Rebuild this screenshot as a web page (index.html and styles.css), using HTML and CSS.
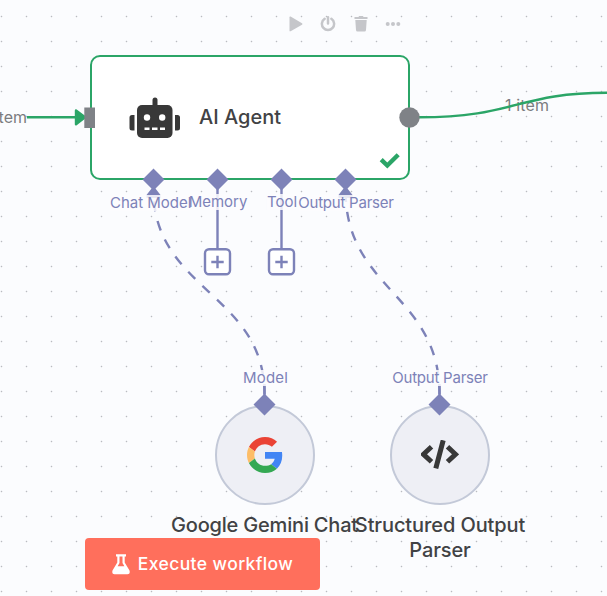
FILE: index.html
```html
<!DOCTYPE html>
<html lang="en">
<head>
<meta charset="utf-8">
<title>Workflow</title>
<link rel="stylesheet" href="styles.css">
</head>
<body>
<main class="canvas">
  <div class="toolbar">
    <svg width="16" height="16" viewBox="0 0 16 16"><path d="M1.500 1.200Q1.500 0 2.600.6L14 7.200Q15 8 14 8.700L2.600 15.200Q1.500 15.700 1.500 14.500Z"/></svg>
    <svg width="16" height="16" viewBox="0 0 16 16"><path class="power" d="M4.600 2.800A6.100 6.100 0 1 0 11.400 2.800M8 1.200V7.500"/></svg>
    <svg width="16" height="16" viewBox="0 0 16 16"><path d="M1.500 1H5.500L6 0H10L10.500 1H14.500V3H1.500ZM2.300 4H13.700L13 14Q12.900 15.500 11.500 15.500H4.500Q3.100 15.500 3 14Z"/></svg>
    <svg width="16" height="16" viewBox="0 0 16 16"><circle cx="2.700" cy="8" r="2"/><circle cx="8" cy="8" r="2"/><circle cx="13.300" cy="8" r="2"/></svg>
  </div>

  <section class="node agent">
    <svg class="robot" width="52" height="42" viewBox="0 -0.500 52 42">
      <rect x="23.500" y="0" width="5" height="12" rx="2.500"/>
      <rect x="8" y="7.500" width="35.500" height="33" rx="5"/>
      <path d="M5.500 17.500V33H3Q.5 33 .5 30.500V20Q.5 17.500 3 17.500ZM46 17.500V33H48.500Q51 33 51 30.500V20Q51 17.500 48.500 17.500Z"/>
      <g class="face"><circle cx="18" cy="20" r="3.200"/><circle cx="33.200" cy="20" r="3.200"/><path d="M15.500 30H20.500V32.500H15.500ZM23 30H28.500V32.500H23ZM31 30H36V32.500H31Z"/></g>
    </svg>
    <h1>AI Agent</h1>
    <svg class="check" width="22" height="18" viewBox="0 0 22 18"><path d="M2.200 7.700L8.300 13.500L19.200 2.700"/></svg>
  </section>

  <section class="node sub gemini">
    <svg width="36" height="36" viewBox="0 0 48 48">
      <path fill="#ea4335" d="M24 9.500c3.540 0 6.710 1.220 9.210 3.600l6.850-6.850C35.900 2.380 30.470 0 24 0 14.620 0 6.510 5.380 2.560 13.220l7.980 6.190C12.430 13.720 17.740 9.500 24 9.500z"/>
      <path fill="#4285f4" d="M46.980 24.550c0-1.570-.15-3.090-.38-4.550H24v9.020h12.940c-.58 2.960-2.260 5.480-4.780 7.180l7.730 6c4.510-4.180 7.090-10.360 7.090-17.650z"/>
      <path fill="#fdbd67" d="M10.530 28.590c-.48-1.450-.76-2.990-.76-4.590s.27-3.140.76-4.590l-7.980-6.190C.92 16.460 0 20.120 0 24c0 3.880.92 7.540 2.560 10.780l7.970-6.190z"/>
      <path fill="#34a853" d="M24 48c6.480 0 11.930-2.130 15.890-5.810l-7.730-6c-2.150 1.450-4.920 2.300-8.160 2.300-6.260 0-11.570-4.220-13.470-9.910l-7.980 6.190C6.510 42.620 14.620 48 24 48z"/>
    </svg>
  </section>
  <section class="node sub parser">
    <svg width="38" height="30" viewBox="0.500 0.500 38 30"><path class="code" d="M11 7.300L3 14.800L11 22.300M27 7.300L35 14.800L27 22.300M22.700 .8L15.300 28.800"/></svg>
  </section>

  <h2 class="name gemini-name">Google Gemini Chat</h2>
  <h2 class="name parser-name">Structured Output Parser</h2>
  <span class="items items-out">1 item</span>

  <svg class="wires" width="607" height="596" viewBox="0 0 607 596">
    <g class="main-wire">
      <path d="M27 117.300H78M419 117.300C515 117.300 518 92.800 607 92.800"/>
      <path class="arrow" d="M76 110.500L85 117.300L76 124.200Z"/>
    </g>
    <g class="ai-wire">
      <path class="dash dash-model" d="M153.500 190C153.500 290 264.500 294 264.500 394"/>
      <path class="dash dash-parser" d="M345.500 190C345.500 290 439.500 294 439.500 394"/>
      <path d="M217.500 185V249M281.500 185V249M264.500 384V400M439.500 384V400"/>
    </g>
    <path class="violet" d="M153.500 186L160.500 195V198H146.500V195ZM345.500 186L352.500 195V198H338.500V195Z"/>
  </svg>

  <span class="items items-in">1 item</span>
  <span class="label memory">Memory</span>
  <span class="label chat">Chat Model</span>
  <span class="label tool">Tool</span>
  <span class="label output">Output Parser</span>
  <span class="label model">Model</span>
  <span class="label output-sub">Output Parser</span>

  <svg class="wires" width="607" height="596" viewBox="0 0 607 596">
    <path class="port" d="M84.300 107.500H95V128H84.300Z"/>
    <circle class="port" cx="409.500" cy="117.500" r="10.200"/>
    <path class="violet" d="M153.500 168.500l11 11-11 11-11-11zM217.500 168.500l11 11-11 11-11-11zM281.500 168.500l11 11-11 11-11-11zM345.500 168.500l11 11-11 11-11-11zM264.500 393.500l11 11-11 11-11-11zM439.500 393.500l11 11-11 11-11-11z"/>
    <g class="plus">
      <rect x="205" y="249.300" width="25" height="25" rx="4"/><path d="M217.500 255.800V268.200M211.300 262H223.700"/>
      <rect x="269" y="249.300" width="25" height="25" rx="4"/><path d="M281.500 255.800V268.200M275.300 262H287.700"/>
    </g>
  </svg>

  <button class="execute">
    <svg width="18" height="21" viewBox="0 0 18 21"><path fill-rule="evenodd" d="M4 .3H14V2.500H12.700V8.500L17.500 16.500Q18.500 20.300 15.500 20.300H2.500Q-.5 20.300 .5 16.500L5.300 8.500V2.500H4ZM7.500 2.500V9L5.600 12.300H12.400L10.500 9V2.500Z"/></svg>
    <span>Execute workflow</span>
  </button>
</main>
</body>
</html>
```

FILE: styles.css
```css
body {
  margin: 0;
  overflow: hidden;
  font-family: Inter, "Liberation Sans", sans-serif;
}

.canvas {
  position: relative;
  width: 607px;
  height: 596px;
  overflow: hidden;
  background: radial-gradient(circle at 1.5px 16.5px, #b9bbc1 0, #b9bbc1 .6px, transparent 1.1px) 0 0 / 25px 25px #fbfcfe;
}

.toolbar {
  position: absolute;
  left: 288px;
  top: 15.500px;
  display: flex;
  gap: 16.300px;
  fill: #c5c6ca;
}

.toolbar .power {
  fill: none;
  stroke: #c5c6ca;
  stroke-width: 2.500;
  stroke-linecap: round;
}

.node {
  position: absolute;
  box-sizing: border-box;
  display: flex;
  align-items: center;
}

.agent {
  left: 90px;
  top: 55px;
  width: 320px;
  height: 125px;
  padding-left: 37px;
  background: #fff;
  border: 2px solid #2ba567;
  border-radius: 10px;
}

.robot {
  fill: #383838;
}

.robot .face {
  fill: #fff;
}

h1,
h2 {
  margin: 0;
  color: #414244;
  font-size: 20px;
  font-weight: 500;
  line-height: 25px;
}

h1 {
  margin-left: 18px;
}

.check {
  position: absolute;
  right: 7px;
  bottom: 8px;
  fill: none;
  stroke: #2ba567;
  stroke-width: 4.400;
}

.sub {
  top: 404.500px;
  width: 100px;
  height: 100px;
  justify-content: center;
  background: #eeeff5;
  border: 2px solid #c3c9d8;
  border-radius: 50%;
}

.gemini {
  left: 214.500px;
}

.parser {
  left: 389.500px;
}

.code {
  fill: none;
  stroke: #383838;
  stroke-width: 5;
}

.name {
  position: absolute;
  top: 513px;
  text-align: center;
}

.gemini-name {
  left: 164.500px;
  width: 200px;
  white-space: nowrap;
  letter-spacing: -.19px;
}

.parser-name {
  left: 340px;
  width: 200px;
  letter-spacing: -.1px;
}

.wires {
  position: absolute;
  inset: 0;
}

.main-wire,
.ai-wire {
  fill: none;
  stroke: #2ba567;
  stroke-width: 2.400;
}

.main-wire .arrow {
  fill: #2ba567;
  stroke-linejoin: round;
}

.ai-wire {
  stroke: #7d82b8;
}

.dash {
  stroke-dasharray: 10 10;
}

.dash-model {
  stroke-dashoffset: 8.800;
}

.dash-parser {
  stroke-dashoffset: 18.200;
}

.violet {
  fill: #7d82b8;
}

.port {
  fill: #7f8287;
}

.plus {
  fill: #fff;
  stroke: #7d82b8;
  stroke-width: 2.400;
}

.items,
.label {
  position: absolute;
  white-space: nowrap;
  font-size: 15px;
  line-height: 16px;
}

.items {
  color: #7b7c80;
  font-size: 16px;
}

.items-in {
  right: 580px;
  top: 109px;
}

.items-out {
  left: 505px;
  top: 97px;
  letter-spacing: .15px;
}

.label {
  top: 194px;
  color: #7d82b8;
  background: rgba(251, 252, 254, .85);
  transform: translateX(-50%);
}

.chat {
  left: 110px;
  top: 195px;
  width: 78px;
  letter-spacing: -.02px;
  transform: none;
}

.memory {
  left: 218px;
}

.tool {
  left: 282px;
}

.output {
  left: 346px;
  top: 195px;
  letter-spacing: -.23px;
}

.model {
  left: 265.500px;
  top: 370px;
  letter-spacing: .2px;
}

.output-sub {
  left: 440px;
  top: 370px;
  letter-spacing: -.23px;
}

.execute {
  position: absolute;
  left: 85px;
  top: 538px;
  width: 235px;
  height: 52px;
  display: flex;
  align-items: center;
  justify-content: center;
  gap: 8px;
  padding: 0;
  border: 0;
  border-radius: 4px;
  background: #ff6f5c;
  color: #fff;
  fill: #fff;
  font: 500 17.500px/24px Inter, "Liberation Sans", sans-serif;
  letter-spacing: .4px;
}
```
